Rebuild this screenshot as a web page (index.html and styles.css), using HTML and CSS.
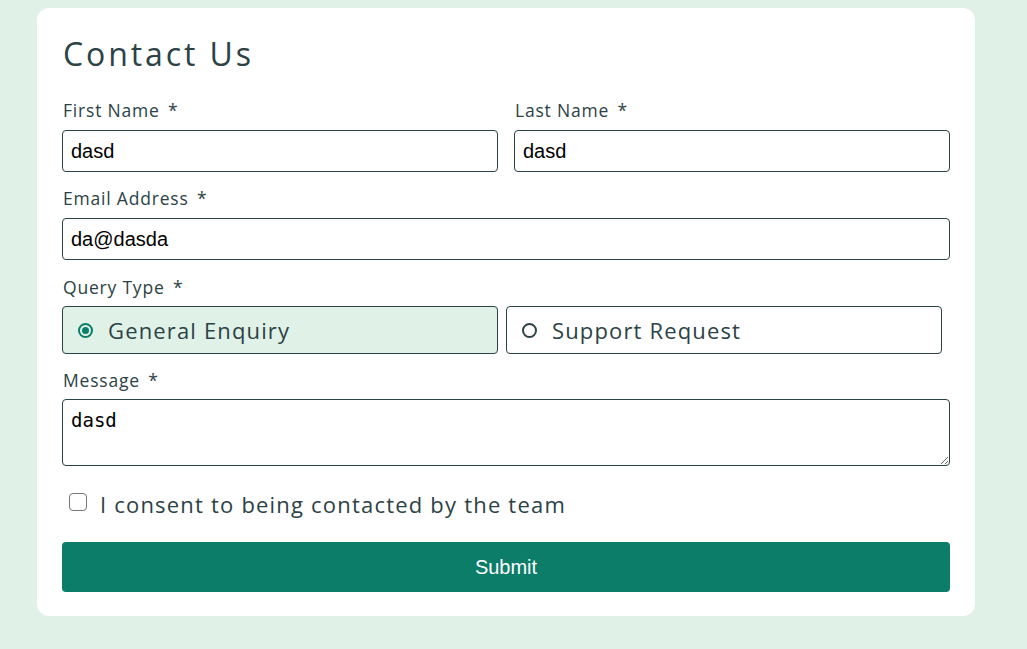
FILE: index.html
```html
<!DOCTYPE html>
<html lang="en">
<head>
<meta charset="utf-8">
<title>Contact Us</title>
<link rel="stylesheet" href="styles.css">
</head>
<body>
<main class="card">
  <h1 class="title">Contact Us</h1>
  <form class="form">
    <div class="row two">
      <div class="field">
        <label class="label">First Name <span class="req">*</span></label>
        <input class="input" type="text" value="dasd">
      </div>
      <div class="field">
        <label class="label">Last Name <span class="req">*</span></label>
        <input class="input" type="text" value="dasd">
      </div>
    </div>
    <div class="field spaced">
      <label class="label">Email Address <span class="req">*</span></label>
      <input class="input" type="text" value="da@dasda">
    </div>
    <div class="field spaced">
      <span class="label label-q label-query">Query Type <span class="req">*</span></span>
      <div class="radios">
        <label class="radio checked"><span class="dot"></span>General Enquiry</label>
        <label class="radio"><span class="dot"></span>Support Request</label>
      </div>
    </div>
    <div class="field spaced">
      <label class="label label-q">Message <span class="req">*</span></label>
      <textarea class="textarea">dasd</textarea>
    </div>
    <label class="consent"><span class="box"></span>I consent to being contacted by the team</label>
    <button class="submit" type="button">Submit</button>
  </form>
</main>
</body>
</html>
```
FILE: styles.css
```css
html, body {
  margin: 0;
  padding: 0;
}
body {
  background: #e0f1e7;
  padding: 8px 0 0 37px;
  height: 649px;
  box-sizing: border-box;
  font-family: "Open Sans", "Liberation Sans", sans-serif;
  color: #2b4246;
}
.card {
  width: 938px;
  box-sizing: border-box;
  background: #fff;
  border-radius: 12px;
  padding: 26px 25px 24px 25px;
}
.title {
  margin: 0 0 26px 1px;
  font-size: 32px;
  line-height: 40px;
  font-weight: 400;
  letter-spacing: 2.9px;
}
.form {
  display: flex;
  flex-direction: column;
}
.row.two {
  display: grid;
  grid-template-columns: 436px 436px;
  column-gap: 16px;
}
.field {
  display: flex;
  flex-direction: column;
}
.field.spaced {
  margin-top: 16px;
}
.label {
  font-size: 17.5px;
  line-height: 20px;
  margin-bottom: 10px;
  margin-left: 1px;
  letter-spacing: 0.8px;
}
.label-q {
  margin-bottom: 9px;
}
.label-query {
  margin-top: 1px;
}
.req {
  margin-left: 3px;
}
.input {
  height: 42px;
  box-sizing: border-box;
  border: 1px solid #2b4246;
  border-radius: 4px;
  padding: 0 8px;
  font-family: "Liberation Sans", Arial, sans-serif;
  font-size: 20px;
  color: #000;
  outline: none;
}
.radios {
  display: grid;
  grid-template-columns: 436px 436px;
  column-gap: 8px;
}
.radio {
  height: 48px;
  box-sizing: border-box;
  border: 1px solid #2b4246;
  border-radius: 4px;
  display: flex;
  align-items: center;
  padding-left: 15px;
  font-size: 22px;
  letter-spacing: 1.15px;
}
.radio.checked {
  background: #e0f1e7;
}
.dot {
  width: 15px;
  height: 15px;
  box-sizing: border-box;
  border: 2px solid #2b4246;
  border-radius: 50%;
  margin-right: 15px;
  position: relative;
}
.radio.checked .dot {
  border-color: #0c7d69;
}
.radio.checked .dot::after {
  content: "";
  position: absolute;
  left: 2px;
  top: 2px;
  width: 7px;
  height: 7px;
  border-radius: 50%;
  background: #0c7d69;
}
.textarea {
  height: 67px;
  box-sizing: border-box;
  border: 1px solid #2b4246;
  border-radius: 4px;
  padding: 9px 8px;
  font-family: "DejaVu Sans Mono", "Liberation Mono", monospace;
  font-size: 19px;
  color: #000;
  resize: vertical;
  outline: none;
}
.consent {
  margin-top: 23px;
  height: 30px;
  display: flex;
  align-items: center;
  font-size: 22px;
  letter-spacing: 1.2px;
  padding-left: 7px;
}
.box {
  width: 18px;
  height: 18px;
  box-sizing: border-box;
  border: 1.5px solid #767676;
  border-radius: 4px;
  margin-right: 13px;
  margin-top: -4px;
}
.submit {
  margin-top: 23px;
  height: 50px;
  border: none;
  border-radius: 4px;
  background: #0c7d69;
  color: #fff;
  font-family: "Liberation Sans", Arial, sans-serif;
  font-size: 20px;
  cursor: pointer;
}
```
